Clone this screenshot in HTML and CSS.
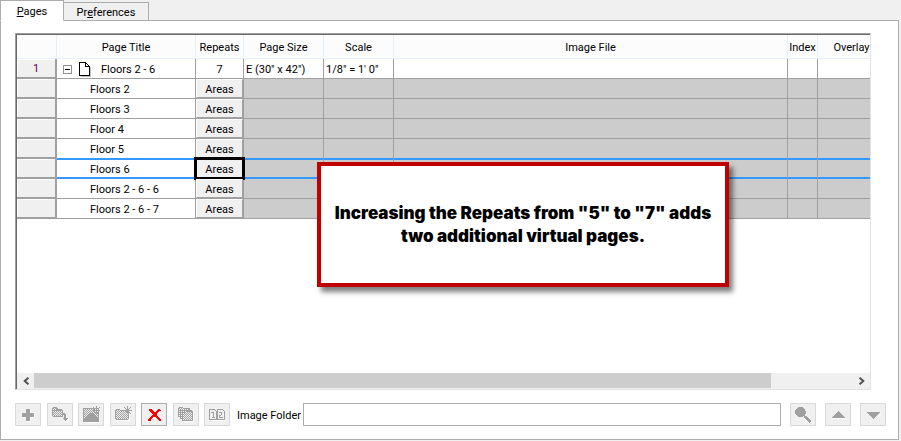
FILE: index.html
```html
<!DOCTYPE html>
<html lang="en">
<head>
<meta charset="utf-8">
<title>Pages</title>
<link rel="stylesheet" href="styles.css">
</head>
<body>
<svg class="defs" aria-hidden="true">
  <defs>
    <pattern id="dither" width="2" height="2" patternUnits="userSpaceOnUse">
      <rect width="2" height="2" fill="#f0f0f0"/>
      <rect width="1" height="1" fill="#a0a0a0"/>
      <rect x="1" y="1" width="1" height="1" fill="#a0a0a0"/>
    </pattern>
  </defs>
</svg>
<nav class="tabs" role="tablist">
  <button class="tab tab-active" role="tab" aria-selected="true"><span><u>P</u>ages</span></button>
  <button class="tab" role="tab" aria-selected="false"><span>Pr<u>e</u>ferences</span></button>
</nav>
<main class="panel">
  <section class="grid-box">
    <div class="grid-view">
      <table class="grid">
        <colgroup>
          <col class="c-num"><col class="c-title"><col class="c-repeats"><col class="c-size"><col class="c-scale"><col><col class="c-index"><col class="c-overlay">
        </colgroup>
        <thead>
          <tr><th></th><th>Page Title</th><th>Repeats</th><th>Page Size</th><th>Scale</th><th>Image File</th><th>Index</th><th>Overlay</th></tr>
        </thead>
        <tbody>
          <tr class="parent">
            <th scope="row">1</th>
            <td><div class="node">
              <button class="toggle" aria-label="Collapse"><svg width="9" height="9" viewBox="0 0 9 9" shape-rendering="crispEdges"><path fill="#fff" stroke="#919191" d="M.5.5h8v8h-8z"/><path stroke="#000" d="M2 4.500h5"/></svg></button>
              <svg width="12" height="15" viewBox="0 0 12 15" shape-rendering="crispEdges"><path stroke="#c0c0c0" fill="none" d="M2 14.500h10M11.500 5v10"/><path fill="#fff" stroke="#000" d="M.5.5h6l4 4v9H.5z"/><path fill="none" stroke="#000" d="M6.500.5v4h4"/></svg>
              <span>Floors 2 - 6</span></div></td>
            <td class="center">7</td><td>E (30" x 42")</td><td>1/8" = 1' 0"</td><td></td><td></td><td></td>
          </tr>
          <tr><th></th><td class="child">Floors 2</td><td class="act"><button>Areas</button></td><td></td><td></td><td></td><td></td><td></td></tr>
          <tr><th></th><td class="child">Floors 3</td><td class="act"><button>Areas</button></td><td></td><td></td><td></td><td></td><td></td></tr>
          <tr><th></th><td class="child">Floor 4</td><td class="act"><button>Areas</button></td><td></td><td></td><td></td><td></td><td></td></tr>
          <tr class="before-current"><th></th><td class="child">Floor 5</td><td class="act"><button>Areas</button></td><td></td><td></td><td></td><td></td><td></td></tr>
          <tr class="current"><th></th><td class="child">Floors 6</td><td class="act"><button>Areas</button></td><td></td><td></td><td></td><td></td><td></td></tr>
          <tr><th></th><td class="child">Floors 2 - 6 - 6</td><td class="act"><button>Areas</button></td><td></td><td></td><td></td><td></td><td></td></tr>
          <tr><th></th><td class="child">Floors 2 - 6 - 7</td><td class="act"><button>Areas</button></td><td></td><td></td><td></td><td></td><td></td></tr>
        </tbody>
      </table>
    </div>
    <div class="scrollbar">
      <button aria-label="Scroll left"><svg width="6" height="8" viewBox="0 0 6 8"><path d="M5.500.7 1.700 4l3.800 3.300" fill="none" stroke="#505050" stroke-width="2"/></svg></button>
      <div class="track"><div class="thumb"></div></div>
      <button aria-label="Scroll right"><svg width="6" height="8" viewBox="0 0 6 8"><path d="M.5.7 4.300 4 .5 7.300" fill="none" stroke="#505050" stroke-width="2"/></svg></button>
    </div>
    <p class="callout">Increasing the Repeats from "5" to "7" adds two additional virtual pages.</p>
  </section>
  <footer class="toolbar">
    <div class="tools">
      <button class="tool" aria-label="Add" disabled><svg viewBox="0 0 18 18" shape-rendering="crispEdges"><path fill="#fff" d="M8 4h4v4h4v4h-4v4H8v-4H4V8h4z"/><path fill="#a0a0a0" d="M7 3h4v4h4v4h-4v4H7v-4H3V7h4z"/></svg></button>
      <button class="tool" aria-label="Import folder" disabled><svg viewBox="0 0 18 18" shape-rendering="crispEdges"><path fill="url(#dither)" stroke="#a0a0a0" d="M1.500 9.500v-7l1-1h3l1 2h4l1 1v6h-9z"/><path stroke="#a0a0a0" fill="none" d="M2 4.500h9"/><path fill="#fff" d="M13 8h2v1h1v4h2v1l-3 3-1-1z"/><path fill="#a0a0a0" d="M11 7h3v1h1v4h2v1h-1v1h-1v1h-1v-1h-1v-1h-1v-1h1V9h-2z"/></svg></button>
      <button class="tool" aria-label="New image" disabled><svg viewBox="0 0 18 18" shape-rendering="crispEdges"><path fill="#fff" d="M2 3h16v14H2z"/><path fill="url(#dither)" stroke="#a0a0a0" d="M1.500 2.500h15v13h-15z"/><path fill="#a0a0a0" d="M2 15v-2l3-3 3-3h2l3 3 4 4v2H2z"/><path fill="#a0a0a0" d="M12 2h5v5h-5zM14 0h1v9h-1zM10 4h8v1h-8zM11 1h1v1h-1zM17 1h1v1h-1zM11 7h1v1h-1z"/><path fill="#f0f0f0" d="M13 3h1v1h-1zM15 3h1v1h-1zM13 5h1v1h-1zM15 5h1v1h-1z"/></svg></button>
      <button class="tool" aria-label="New folder" disabled><svg viewBox="0 0 18 18" shape-rendering="crispEdges"><path stroke="#fff" fill="none" d="M3 14.500h12.500V6"/><path fill="url(#dither)" stroke="#a0a0a0" d="M1.500 12.500v-8l1-1h3l1 1h7l1 1v7l-1 1h-11z"/><path fill="#a0a0a0" d="M13 0h1v3h-1zM10 1h1v1h1v1h-1V2h-1zM16 1h1v1h-1v1h-1V2h1zM12 3h3v3h-3zM15 4h3v1h-3zM9 4h3v1H9zM15 6h1v1h1v1h-1V7h-1zM13 6h1v2h-1z"/></svg></button>
      <button class="tool tool-on" aria-label="Delete"><svg viewBox="0 0 18 18" shape-rendering="crispEdges"><path fill="#f00" d="M4 3h3v1h1v1h1v1h2V5h1V4h1V3h2v1h1v1h-2v1h-1v1h-1v3h1v1h1v1h1v1h1v2h-2v-1h-1v-1h-1v-1h-1v-1H8v1H7v1H6v2H3v-2h1v-1h1v-1h1v-1h1V9h1V8H7V7H6V6H5V5H4z"/></svg></button>
      <button class="tool" aria-label="Copy folders" disabled><svg viewBox="0 0 18 18" shape-rendering="crispEdges"><path fill="url(#dither)" stroke="#a0a0a0" d="M1.500 10.500v-8l1-1h3l1 1h6v8z"/><path fill="url(#dither)" stroke="#a0a0a0" d="M3.500 12.500v-8h11v8z"/><path stroke="#fff" fill="none" d="M6 15.500h10.500V6"/><path fill="url(#dither)" stroke="#a0a0a0" d="M5.500 14.500v-8h3l1-1h6v9z"/></svg></button>
      <button class="tool" aria-label="Renumber pages" disabled><svg viewBox="0 0 18 18" shape-rendering="crispEdges"><path fill="#f0f0f0" stroke="#a0a0a0" d="M1.500 3.500h5l2 2v8h-7zM9.500 3.500h5l2 2v8h-7z"/><path stroke="#fff" fill="none" d="M2 14.500h16"/><path fill="none" stroke="#a0a0a0" d="M3 6.500h2.500v5M4 11.500h3M11 6.500h2.500v2L11.500 10v1.500H15"/></svg></button>
    </div>
    <label for="folder">Image Folder</label>
    <input id="folder" type="text">
    <button class="tool" aria-label="Browse" disabled><svg viewBox="0 0 18 18" shape-rendering="crispEdges"><path stroke="#fff" stroke-width="3" d="m11 11 6 6"/><path fill="#a0a0a0" d="M4 1h5v1h1v1h1v2h1v3h-1v2h2v1h1v1h1v1h1v1h1v2h-1v1h-1v-1h-1v-1h-1v-1h-1v-1h-1v-1h-1v-2H9v1H4v-1H3V9H2V8H1V4h1V3h1V2h1z"/></svg></button>
    <button class="tool" aria-label="Move up" disabled><svg viewBox="0 0 18 18" shape-rendering="crispEdges"><path fill="#fff" d="M3 12h14v1H3z"/><path fill="#a0a0a0" d="m9 5 7 7H2l7-7z"/></svg></button>
    <button class="tool" aria-label="Move down" disabled><svg viewBox="0 0 18 18" shape-rendering="crispEdges"><path fill="#fff" d="M17 7v1l-6 6h-1z"/><path fill="#a0a0a0" d="M2 6h14l-7 7z"/></svg></button>
  </footer>
</main>
</body>
</html>
```
FILE: styles.css
```css
* { box-sizing: border-box; }

body {
  margin: 0;
  min-height: 100vh;
  padding: 0 2px 1px 0;
  display: flex;
  flex-direction: column;
  background: #f0f0f0;
  color: #000;
  font: 11px/14px Roboto, "Liberation Sans", sans-serif;
}

button, input {
  font: inherit;
  color: inherit;
  margin: 0;
  padding: 0;
}

.defs { position: absolute; width: 0; height: 0; }

.tabs {
  display: flex;
  align-items: flex-end;
  height: 21px;
  margin-bottom: -1px;
}

.tab {
  position: relative;
  height: 19px;
  width: 85px;
  padding-top: 2px;
  border: 1px solid #acacac;
  border-left: 0;
  background: #f0f0f0;
}

.tab-active {
  z-index: 1;
  height: 21px;
  width: 64px;
  border-left: 1px solid #acacac;
  border-bottom-color: #fff;
  background: #fff;
}

.panel {
  flex: 1;
  display: flex;
  flex-direction: column;
  padding: 12px 12px 13px 14px;
  border: 1px solid #acacac;
  background: #fff;
}

.grid-box {
  position: relative;
  flex: 1;
  display: flex;
  flex-direction: column;
  margin-right: 15px;
  border: 1px solid #e3e3e3;
  border-top-color: #a0a0a0;
  border-left-color: #a0a0a0;
  box-shadow: inset 1px 1px #696969;
  padding: 1px 0 0 1px;
}

.grid-view { flex: 1; overflow: hidden; }

.grid {
  width: calc(100% + 16px);
  table-layout: fixed;
  border-collapse: separate;
  border-spacing: 0;
}

.c-num { width: 40px; }
.c-title { width: 139px; }
.c-repeats { width: 48px; }
.c-size { width: 80px; }
.c-scale { width: 70px; }
.c-index { width: 30px; }
.c-overlay { width: 68px; }

.grid th { font-weight: normal; padding: 2px 0 0; }

.grid thead th {
  height: 24px;
  background: #fcfcfc;
  border-right: 1px solid #e5f0fb;
  border-bottom: 1px solid #e5f0fb;
}

.grid tbody th {
  height: 20px;
  background: #f0f0f0;
  border: solid #a0a0a0;
  border-width: 0 2px 2px 0;
  box-shadow: inset 1px 1px #fff;
  color: #600060;
}

.grid td {
  height: 20px;
  padding: 2px 2px 0;
  white-space: nowrap;
  background: #ccc;
  border-right: 1px solid #a0a0a0;
  border-bottom: 1px solid #a0a0a0;
}

.parent td, .grid .child { background: #fff; }
.grid .child { padding-left: 33px; }
.grid .center { text-align: center; }
.grid .act { padding: 0; }

.act button {
  display: block;
  position: relative;
  width: 100%;
  height: 19px;
  padding-top: 2px;
  border: 1px solid #a0a0a0;
  border-top-color: #fff;
  border-left-color: #fff;
  border-radius: 0;
  background: #f0f0f0;
}

.before-current td { border-bottom-color: #3399ff; }

.current td {
  border-bottom-color: #3399ff;
  box-shadow: inset 0 1px #3399ff, inset 0 -1px #3399ff;
}

.current button { outline: 3px solid #000; outline-offset: -1px; }

.node { display: flex; align-items: center; height: 16px; padding-left: 4px; }
.node svg { display: block; }
.node span { padding-left: 10px; }

.toggle { border: 0; background: none; margin-right: 7px; }

.scrollbar { display: flex; height: 16px; background: #f0f0f0; }

.scrollbar button {
  display: flex;
  align-items: center;
  justify-content: center;
  width: 17px;
  border: 0;
  background: none;
}

.track { flex: 1; }
.thumb { width: 90%; height: 15px; background: #cdcdcd; }

.callout {
  position: absolute;
  top: 128px;
  left: calc(50% - 126px);
  width: 412px;
  height: 125px;
  margin: 0;
  padding: 0 8px;
  display: flex;
  align-items: center;
  text-align: center;
  border: 4px solid #c00000;
  background: #fff;
  box-shadow: 4px 5px 5px rgba(0, 0, 0, .5);
  font: 900 17px/23px Inter, "Liberation Sans", sans-serif;
}

.toolbar {
  display: flex;
  align-items: center;
  gap: 9px;
  margin-top: 13px;
}

.tools { display: flex; justify-content: space-between; width: 215px; }

.tool {
  display: flex;
  align-items: center;
  justify-content: center;
  width: 26px;
  height: 23px;
  border: 1px solid #d9d9d9;
  border-radius: 0;
  background: #f0f0f0;
}

.tool svg { display: block; width: 18px; height: 18px; }
.tool-on { border-color: #adadad; }

.toolbar label { margin: 2px -7px 0 -2px; white-space: nowrap; }

.toolbar input {
  flex: 1;
  min-width: 0;
  height: 23px;
  padding: 0 4px;
  border: 1px solid #abadb3;
  border-radius: 0;
  background: #fff;
}
```
